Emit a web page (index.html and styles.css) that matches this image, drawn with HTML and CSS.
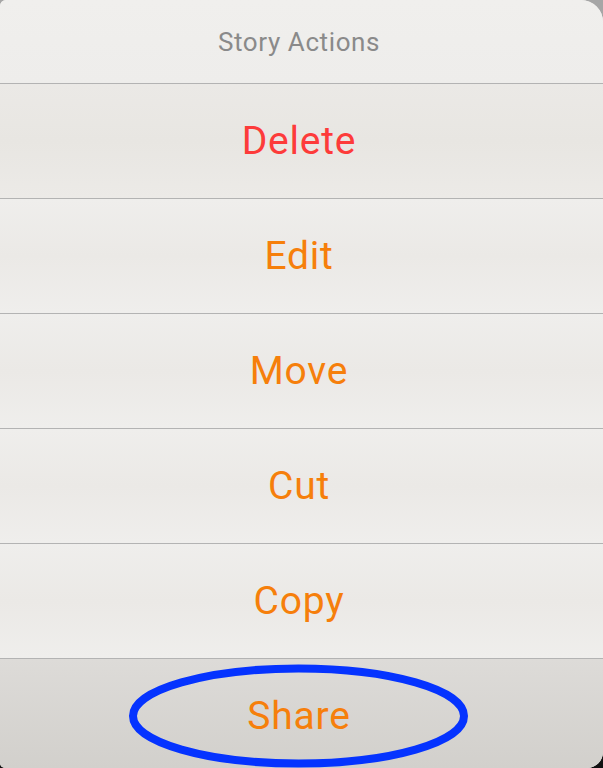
FILE: index.html
```html
<!DOCTYPE html>
<html lang="en">
<head>
    <meta charset="UTF-8">
    <meta name="viewport" content="width=device-width, initial-scale=1.0">
    <title>Story Actions</title>
    <link rel="stylesheet" href="styles.css">
</head>
<body>
    <div class="sheet">
        <div class="sheet-title">Story Actions</div>
        <button class="action danger">Delete</button>
        <button class="action">Edit</button>
        <button class="action">Move</button>
        <button class="action">Cut</button>
        <button class="action">Copy</button>
        <button class="action last">
            Share
            <svg class="mark" width="603" height="110" viewBox="0 0 603 110">
                <ellipse cx="298.5" cy="57" rx="165.5" ry="47.5" fill="none" stroke="#0533ff" stroke-width="8"/>
            </svg>
        </button>
    </div>
</body>
</html>
```

FILE: styles.css
```css
html, body { margin: 0; height: 100%; }
body {
    font-family: Roboto, "Liberation Sans", sans-serif;
    background: linear-gradient(#a6a6a6 0, #a6a6a6 50%, #111 50%, #111 100%);
    overflow: hidden;
}
.sheet {
    display: flex;
    flex-direction: column;
    width: 603px;
    height: 768px;
    background-color: #eeedeb;
    border-radius: 6px 22px 16px 5px;
    overflow: hidden;
}
.sheet-title {
    height: 83px;
    display: flex;
    align-items: center;
    justify-content: center;
    padding-right: 5px;
    font-size: 26px;
    color: #8a8a8a;
    letter-spacing: 0.6px;
    background: linear-gradient(#f0efed, #eeedeb);
}
.action {
    position: relative;
    height: 115px;
    flex: none;
    display: flex;
    align-items: center;
    justify-content: center;
    padding: 0 5px 0 0;
    border: none;
    border-top: 1px solid #b3b3b3;
    font-family: inherit;
    font-size: 39px;
    letter-spacing: 0.8px;
    color: #f67f0b;
    background: linear-gradient(#efeeec, #ebe9e6 50%, #efeeec);
    cursor: pointer;
}
.danger { color: #fd3b3a; background: linear-gradient(#ebe9e6, #e8e6e2 50%, #eceae7); }
.last {
    flex: 1;
    height: auto;
    padding-top: 5px;
    background: linear-gradient(#dddbd8, #d2d0cc);
}
.mark {
    position: absolute;
    left: 0;
    top: 0;
}
```
